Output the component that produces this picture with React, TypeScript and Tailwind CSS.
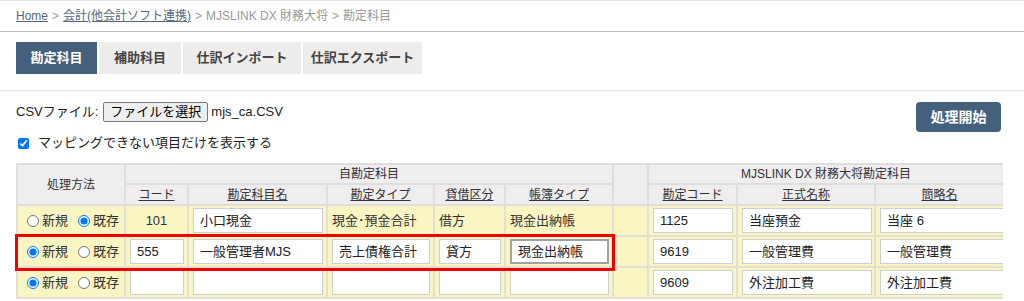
import React from "react";

const font = { fontFamily: '"Liberation Sans", "Noto Sans CJK JP", sans-serif' };

function Radio({ checked, label }: { checked: boolean; label: string }) {
  return (
    <label className="flex items-center gap-[3px]">
      <input type="radio" defaultChecked={checked} className="m-0 w-[12px] h-[12px]" />
      <span>{label}</span>
    </label>
  );
}

function Field({ value, w, dark }: { value: string; w: string; dark?: boolean }) {
  return (
    <div
      className={`${w} h-[25px] bg-white flex items-center pl-[6px] text-[13px] text-[#222] ${
        dark ? "border-2 border-[#a3a3a3]" : "border border-[#cfcfcf]"
      }`}
    >
      {value}
    </div>
  );
}

type Row = {
  newChecked: boolean;
  code?: string;
  codeInput?: string;
  name: string;
  type?: string;
  typeInput?: string;
  dc?: string;
  dcInput?: string;
  book?: string;
  bookInput?: string;
  acode: string;
  formal: string;
  short: string;
};

const rows: Row[] = [
  { newChecked: false, code: "101", name: "小口現金", type: "現金･預金合計", dc: "借方", book: "現金出納帳", acode: "1125", formal: "当座預金", short: "当座 6" },
  { newChecked: true, codeInput: "555", name: "一般管理者MJS", typeInput: "売上債権合計", dcInput: "貸方", bookInput: "現金出納帳", acode: "9619", formal: "一般管理費", short: "一般管理費" },
  { newChecked: true, codeInput: "", name: "", typeInput: "", dcInput: "", bookInput: "", acode: "9609", formal: "外注加工費", short: "外注加工費" },
];

const th = "border-2 border-[#dedede] bg-[#efeded] font-normal text-[12px] text-[#333] p-0";
const td = "border-2 border-[#e2e0d2] bg-[#faf6c4] p-0 h-[31px] text-[13px] text-[#333]";

export default function App() {
  return (
    <div className="w-[1024px] h-[301px] overflow-hidden bg-white border-t border-[#e2e2e2]" style={font}>
      {/* breadcrumb */}
      <div className="h-[31px] border-b border-[#bcbcbc] flex items-center pl-[16px] text-[12px] text-[#999] gap-[4px]">
        <span className="underline text-[#55677a]">Home</span>
        <span>&gt;</span>
        <span className="underline text-[#55677a]">会計(他会計ソフト連携)</span>
        <span>&gt;</span>
        <span>MJSLINK DX 財務大将</span>
        <span>&gt;</span>
        <span>勘定科目</span>
      </div>
      {/* tabs */}
      <div className="h-[59px] border-b border-[#e3e3e3] pl-[16px] pt-[10px] flex gap-[2px] items-start">
        <div className="w-[81px] h-[32px] bg-[#45607c] text-white font-bold text-[13px] flex items-center justify-center">勘定科目</div>
        <div className="w-[82px] h-[32px] bg-[#efedec] text-[#444] font-bold text-[13px] flex items-center justify-center">補助科目</div>
        <div className="w-[118px] h-[32px] bg-[#efedec] text-[#444] font-bold text-[13px] flex items-center justify-center">仕訳インポート</div>
        <div className="w-[119px] h-[32px] bg-[#efedec] text-[#444] font-bold text-[13px] flex items-center justify-center">仕訳エクスポート</div>
      </div>
      {/* controls */}
      <div className="flex justify-between pl-[16px] pr-[23px] h-[72px]">
        <div className="flex flex-col pt-[11px]">
          <div className="flex items-center h-[20px] text-[13px] text-[#222]">
            <span>CSVファイル:</span>
            <span className="ml-[5px] h-[20px] px-[6px] border border-[#767676] rounded-[2px] bg-[#efefef] flex items-center text-[13px] text-black">ファイルを選択</span>
            <span className="ml-[3px]">mjs_ca.CSV</span>
          </div>
          <label className="flex items-center mt-[11px] h-[20px] text-[13px] text-[#222]">
            <input type="checkbox" defaultChecked className="m-0 ml-[2px] w-[11px] h-[11px]" />
            <span className="ml-[9px]">マッピングできない項目だけを表示する</span>
          </label>
        </div>
        <div className="pt-[11px]">
          <div className="w-[85px] h-[30px] bg-[#45607c] rounded-[4px] text-white font-bold text-[14px] flex items-center justify-center">処理開始</div>
        </div>
      </div>
      {/* table */}
      <div className="pl-[15px]">
        <div className="relative w-[988px] overflow-hidden">
          <table className="table-fixed border-collapse w-[1003px] ml-[1px]">
            <colgroup>
              <col className="w-[108px]" />
              <col className="w-[63px]" />
              <col className="w-[139px]" />
              <col className="w-[107px]" />
              <col className="w-[71px]" />
              <col className="w-[108px]" />
              <col className="w-[35px]" />
              <col className="w-[89px]" />
              <col className="w-[138px]" />
              <col className="w-[145px]" />
            </colgroup>
            <thead>
              <tr className="h-[20px]">
                <th rowSpan={2} className={th}>処理方法</th>
                <th colSpan={5} className={th}>自勘定科目</th>
                <th rowSpan={2} className={th}></th>
                <th colSpan={3} className={th}><span className="relative left-[-8px]">MJSLINK DX 財務大将勘定科目</span></th>
              </tr>
              <tr className="h-[21px]">
                {["コード", "勘定科目名", "勘定タイプ", "貸借区分", "帳簿タイプ"].map((h) => (
                  <th key={h} className={th}><span className="underline">{h}</span></th>
                ))}
                {["勘定コード", "正式名称"].map((h) => (
                  <th key={h} className={th}><span className="underline">{h}</span></th>
                ))}
                <th className={th}><span className="underline relative left-[-8px]">簡略名</span></th>
              </tr>
            </thead>
            <tbody>
              {rows.map((r, i) => (
                <tr key={i}>
                  <td className={td}>
                    <div className="flex items-center gap-[10px] pl-[9px]">
                      <Radio checked={r.newChecked} label="新規" />
                      <Radio checked={!r.newChecked} label="既存" />
                    </div>
                  </td>
                  <td className={td}>
                    {r.code !== undefined ? (
                      <div className="text-center">{r.code}</div>
                    ) : (
                      <div className="px-[4px]"><Field value={r.codeInput ?? ""} w="w-[54px]" /></div>
                    )}
                  </td>
                  <td className={td}>
                    <div className="px-[4px]"><Field value={r.name} w="w-[130px]" /></div>
                  </td>
                  <td className={td}>
                    {r.type !== undefined ? (
                      <div className="pl-[4px]">{r.type}</div>
                    ) : (
                      <div className="px-[4px]"><Field value={r.typeInput ?? ""} w="w-[98px]" /></div>
                    )}
                  </td>
                  <td className={td}>
                    {r.dc !== undefined ? (
                      <div className="pl-[4px]">{r.dc}</div>
                    ) : (
                      <div className="px-[4px]"><Field value={r.dcInput ?? ""} w="w-[62px]" /></div>
                    )}
                  </td>
                  <td className={td}>
                    {r.book !== undefined ? (
                      <div className="pl-[4px]">{r.book}</div>
                    ) : (
                      <div className="px-[4px]"><Field value={r.bookInput ?? ""} w="w-[99px]" dark={i === 1} /></div>
                    )}
                  </td>
                  <td className={td}></td>
                  <td className={td}>
                    <div className="px-[4px]"><Field value={r.acode} w="w-[80px]" /></div>
                  </td>
                  <td className={td}>
                    <div className="px-[4px]"><Field value={r.formal} w="w-[130px]" /></div>
                  </td>
                  <td className={td}>
                    <div className="pl-[4px]"><Field value={r.short} w="w-[140px]" /></div>
                  </td>
                </tr>
              ))}
            </tbody>
          </table>
          <div className="absolute left-0 top-[71px] w-[600px] h-[37px] border-[3px] border-[#f00000] pointer-events-none" />
        </div>
      </div>
    </div>
  );
}
